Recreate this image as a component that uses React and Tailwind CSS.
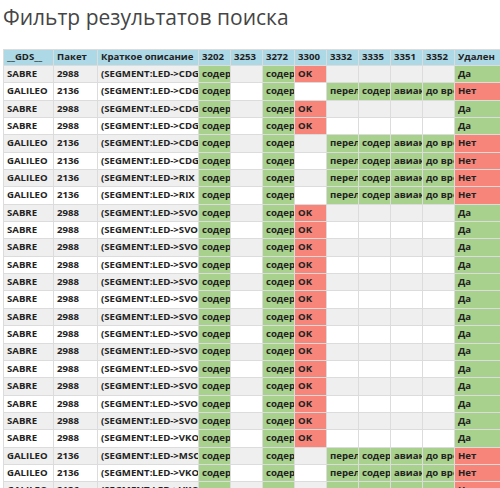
export default function App() {
  const G = "bg-[#a9d18e]", R = "bg-[#f7857a]";
  const rows = [];
  const sabre = (d) => ({ g: "SABRE", p: "2988", d, t: "sabre" });
  const gal = (d) => ({ g: "GALILEO", p: "2136", d, t: "gal" });
  rows.push(sabre("CDG"), gal("CDG"), sabre("CDG"), sabre("CDG"), gal("CDG"), gal("CDG"), gal("RIX"), gal("RIX"));
  for (let i = 0; i < 13; i++) rows.push(sabre("SVO"));
  rows.push(sabre("VKO"), gal("MSC"), gal("VKO"), gal("VKO"));
  const heads = ["__GDS__", "Пакет", "Краткое описание", "3202", "3253", "3272", "3300", "3332", "3335", "3351", "3352", "Удален"];
  const widths = [50, 44, 101, 32, 32, 32, 32, 32, 32, 32, 32, 70];
  const total = widths.reduce((a, b) => a + b, 0);
  const cell = "border border-[#dcdcdc] px-[3px] overflow-hidden whitespace-nowrap text-left align-middle";
  return (
    <div className="w-[500px] h-[488px] overflow-hidden bg-white" style={{ fontFamily: '"Open Sans", sans-serif' }}>
      <div className="pl-[3px] pt-[3px] text-[21px] leading-[28px] text-[#454545]">Фильтр результатов поиска</div>
      <div className="pl-[3px] pt-[18px]">
        <table className="border-collapse table-fixed text-[9.6px] font-bold text-[#222]" style={{ width: total }}>
          <colgroup>{widths.map((w, i) => <col key={i} style={{ width: w }} />)}</colgroup>
          <thead>
            <tr className="h-[16px] bg-[#add8e6]">
              {heads.map((h, i) => <th key={i} className={cell + " font-bold"}>{h}</th>)}
            </tr>
          </thead>
          <tbody>
            {rows.map((r, i) => {
              const bg = i % 2 === 0 ? "bg-[#efefef]" : "bg-white";
              const s = r.t === "sabre";
              return (
                <tr key={i} className={"h-[17.35px] " + bg}>
                  <td className={cell}>{r.g}</td>
                  <td className={cell}>{r.p}</td>
                  <td className={cell}>(SEGMENT:LED-&gt;{r.d}</td>
                  <td className={cell + " " + G}>содержит</td>
                  <td className={cell}></td>
                  <td className={cell + " " + G}>содержит</td>
                  <td className={cell + (s ? " " + R : "")}>{s ? "OK" : ""}</td>
                  <td className={cell + (s ? "" : " " + G)}>{s ? "" : "перелет"}</td>
                  <td className={cell + (s ? "" : " " + G)}>{s ? "" : "содержит"}</td>
                  <td className={cell + (s ? "" : " " + G)}>{s ? "" : "авиакомпания"}</td>
                  <td className={cell + (s ? "" : " " + G)}>{s ? "" : "до времени"}</td>
                  <td className={cell + " " + (s ? G : R)}>{s ? "Да" : "Нет"}</td>
                </tr>
              );
            })}
          </tbody>
        </table>
      </div>
    </div>
  );
}
